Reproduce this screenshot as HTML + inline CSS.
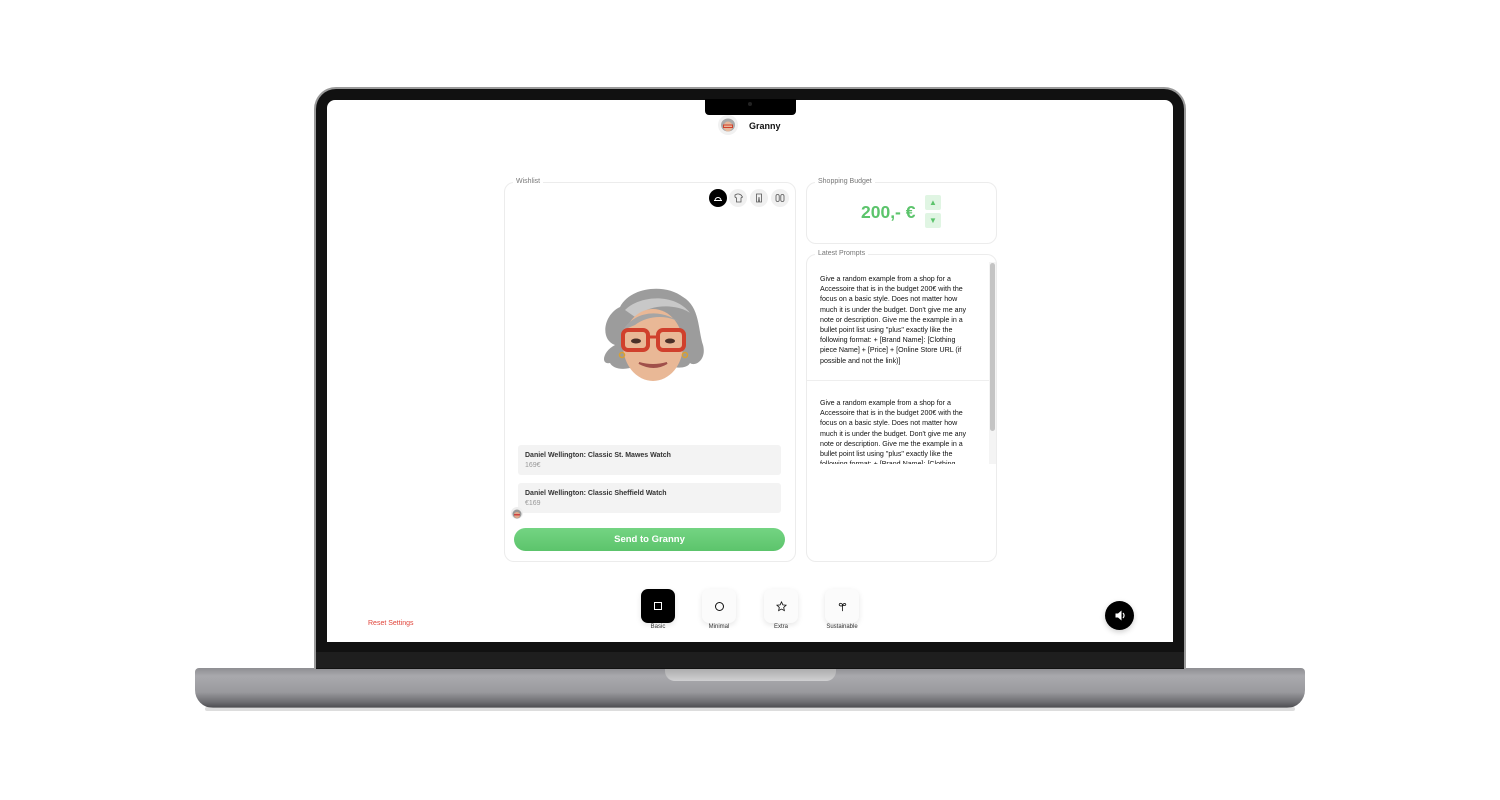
<!DOCTYPE html>
<html><head><meta charset="utf-8"><style>
*{margin:0;padding:0;box-sizing:border-box}
body{width:1500px;height:800px;background:#fff;position:relative;overflow:hidden;font-family:"Liberation Sans",Arial,sans-serif}
.a{position:absolute}
.fs{position:absolute;border:1px solid #ececec;border-radius:10px;background:#fff}
.lg{position:absolute;top:-5px;left:8px;background:#fff;padding:0 3px;font-size:7px;color:#777}
.ic{position:absolute;width:18px;height:18px;border-radius:50%;background:#f0f0f0;top:189px}
.item{position:absolute;left:518px;width:263px;height:30px;background:#f3f3f3;border-radius:3px;padding:6px 7px;font-size:7px;color:#222;line-height:10px}
.item span{color:#999}
.pt{font-size:7.1px;line-height:10.2px;color:#111}
.bb{position:absolute;top:589px;width:34px;height:34px;border-radius:7px;background:#fbfbfb;box-shadow:0 2px 6px rgba(0,0,0,.1);display:flex;align-items:center;justify-content:center}
.bl{position:absolute;top:624px;font-size:6px;color:#333;width:60px;text-align:center}
</style></head><body>
<!-- base -->
<div class="a" style="left:195px;top:668px;width:1110px;height:40px;border-radius:4px 4px 18px 18px;background:linear-gradient(#8e8e92,#a9a9ad 20%,#9a9a9e 60%,#6e6e72 85%,#4a4a4e)"></div>
<div class="a" style="left:205px;top:707px;width:1090px;height:4px;background:#bbb;opacity:.5;border-radius:2px"></div>
<div class="a" style="left:665px;top:668px;width:171px;height:13px;border-radius:0 0 10px 10px;background:linear-gradient(#aaa,#d0d0d2)"></div>
<!-- lid -->
<div class="a" style="left:314px;top:87px;width:872px;height:582px;border-radius:22px 22px 0 0;background:#111;border:2px solid #9a9a9a;border-bottom:none"></div>
<div class="a" style="left:316px;top:652px;width:868px;height:16px;background:#1e1e1e"></div>
<div class="a" style="left:327px;top:100px;width:846px;height:542px;background:#fff;border-radius:8px 8px 0 0"></div>
<div class="a" style="left:705px;top:99px;width:91px;height:16px;background:#000;border-radius:0 0 4px 4px"></div>
<div class="a" style="left:748px;top:102px;width:4px;height:4px;border-radius:50%;background:#222"></div>
<!-- header -->
<div class="a" style="left:718px;top:115px;width:20px;height:20px;border-radius:50%;background:#f1f1f1;overflow:hidden"><svg width="20" height="20" viewBox="0 0 20 20"><ellipse cx="10" cy="10" rx="7" ry="6.5" fill="#aaa"/><ellipse cx="10" cy="11.5" rx="4.5" ry="5" fill="#e6b79a"/><rect x="5.5" y="10" width="9" height="2.5" fill="none" stroke="#d0402c" stroke-width="1"/></svg></div>
<div class="a" style="left:749px;top:121px;font-size:9px;font-weight:bold;color:#111">Granny</div>
<!-- wishlist -->
<div class="fs" style="left:504px;top:182px;width:292px;height:380px"><div class="lg">Wishlist</div></div>
<div class="ic" style="left:709px;background:#000"><svg width="18" height="18"><path d="M5 11.5h8M6 11.5a3 3 0 0 1 6 0" fill="none" stroke="#fff" stroke-width="1"/></svg></div>
<div class="ic" style="left:729px"><svg width="18" height="18"><path d="M6 6l2-1h2l2 1 1.5 2-1.5 1v4H7.5V9L6 8z" fill="none" stroke="#555" stroke-width=".8"/></svg></div>
<div class="ic" style="left:750px"><svg width="18" height="18"><path d="M6.5 5h5v8h-2L9 8l-.5 5h-2z" fill="none" stroke="#555" stroke-width=".8"/></svg></div>
<div class="ic" style="left:771px"><svg width="18" height="18"><rect x="5" y="5.5" width="3.2" height="7" rx="1.5" fill="none" stroke="#555" stroke-width=".8"/><rect x="9.8" y="5.5" width="3.2" height="7" rx="1.5" fill="none" stroke="#555" stroke-width=".8"/></svg></div>
<!-- memoji -->
<svg class="a" style="left:595px;top:285px" width="115" height="105" viewBox="0 0 115 105">
<path d="M20 60C5 55 8 30 25 22C35 2 70 -2 88 12C105 22 103 45 108 60C112 75 100 82 95 78C90 88 60 80 57 70C45 85 20 88 15 78C5 80 8 66 20 60z" fill="#9c9c9c"/>
<path d="M30 25C45 10 80 8 95 28C88 22 60 15 40 32z" fill="#c8c8c8"/>
<ellipse cx="58" cy="60" rx="30" ry="36" fill="#e9b896"/>
<path d="M28 45C40 25 70 22 90 42C80 30 55 28 40 40z" fill="#a5a5a5"/>
<rect x="28" y="45" width="25" height="20" rx="5" fill="none" stroke="#d0402c" stroke-width="4"/>
<rect x="63" y="45" width="26" height="20" rx="5" fill="none" stroke="#d0402c" stroke-width="4"/>
<path d="M53 52h10" stroke="#d0402c" stroke-width="3"/>
<ellipse cx="41" cy="56" rx="5" ry="2.5" fill="#4a3028"/><ellipse cx="75" cy="56" rx="5" ry="2.5" fill="#4a3028"/>
<path d="M44 78q15 8 28 0q-14 4-28 0z" fill="#fff" stroke="#a0504a" stroke-width="2"/>
<circle cx="27" cy="70" r="2.5" fill="none" stroke="#d9a030" stroke-width="1.5"/><circle cx="90" cy="70" r="2.5" fill="none" stroke="#d9a030" stroke-width="1.5"/>
</svg>
<div class="item" style="top:445px"><b style="font-weight:bold;color:#333">Daniel Wellington: Classic St. Mawes Watch</b><br><span>169€</span></div>
<div class="item" style="top:483px"><b style="font-weight:bold;color:#333">Daniel Wellington: Classic Sheffield Watch</b><br><span>€169</span></div>
<div class="a" style="left:511px;top:507px;width:12px;height:12px;border-radius:50%;background:#eee;overflow:hidden"><svg width="12" height="12"><circle cx="6" cy="6" r="4.5" fill="#999"/><circle cx="6" cy="7" r="3" fill="#e2a98a"/><rect x="3" y="6" width="6" height="1.5" fill="#c44"/></svg></div>
<div class="a" style="left:514px;top:528px;width:271px;height:23px;border-radius:12px;background:linear-gradient(#74d483,#5cc46c);color:#fff;font-size:9.5px;font-weight:bold;text-align:center;line-height:23px">Send to Granny</div>
<!-- budget -->
<div class="fs" style="left:806px;top:182px;width:191px;height:62px"><div class="lg">Shopping Budget</div></div>
<div class="a" style="left:861px;top:202px;font-size:17.5px;font-weight:bold;color:#5cc46c">200,- €</div>
<div class="a" style="left:925px;top:195px;width:16px;height:15px;background:#e0f5e3;border-radius:2px;color:#5cc46c;font-size:8px;text-align:center;line-height:15px">▲</div>
<div class="a" style="left:925px;top:213px;width:16px;height:15px;background:#e0f5e3;border-radius:2px;color:#5cc46c;font-size:8px;text-align:center;line-height:15px">▼</div>
<!-- prompts -->
<div class="fs" style="left:806px;top:254px;width:191px;height:308px"><div class="lg">Latest Prompts</div></div>
<div class="a" style="left:807px;top:262px;width:182px;height:202px;overflow:hidden">
<div class="pt" style="padding:12px 10px 12px 13px;width:172px;height:118px">Give a random example from a shop for a Accessoire that is in the budget 200€ with the focus on a basic style. Does not matter how much it is under the budget. Don't give me any note or description. Give me the example in a bullet point list using "plus" exactly like the following format: + [Brand Name]: [Clothing piece Name] + [Price] + [Online Store URL (if possible and not the link)]</div>
<div style="border-top:1px solid #eee"></div>
<div class="pt" style="padding:17px 10px 12px 13px;width:172px">Give a random example from a shop for a Accessoire that is in the budget 200€ with the focus on a basic style. Does not matter how much it is under the budget. Don't give me any note or description. Give me the example in a bullet point list using "plus" exactly like the following format: + [Brand Name]: [Clothing piece Name]</div>
</div>
<div class="a" style="left:989px;top:262px;width:7px;height:202px;background:#f4f4f4"></div>
<div class="a" style="left:990px;top:263px;width:5px;height:168px;background:#c4c4c4;border-radius:3px"></div>
<!-- bottom -->
<div class="a" style="left:368px;top:620px;font-size:7px;color:#e0443a">Reset Settings</div>
<div class="bb" style="left:641px;background:#000"><div style="width:8px;height:8px;border:1px solid #fff"></div></div>
<div class="bb" style="left:702px"><div style="width:9px;height:9px;border:1px solid #111;border-radius:50%"></div></div>
<div class="bb" style="left:764px"><svg width="11" height="11" viewBox="0 0 12 12"><path d="M6 1l1.5 3.2 3.5.4-2.6 2.4.7 3.5L6 8.8 2.9 10.5l.7-3.5L1 4.6l3.5-.4z" fill="none" stroke="#111" stroke-width=".9"/></svg></div>
<div class="bb" style="left:825px"><svg width="11" height="11" viewBox="0 0 12 12"><path d="M6 11V5M6 5C6 2 3 2 2.5 3.5S4 6 6 5M6 5c0-2 3-3 3.5-1.5S8 5 6 5" fill="none" stroke="#111" stroke-width=".9"/></svg></div>
<div class="bl" style="left:628px">Basic</div>
<div class="bl" style="left:689px">Minimal</div>
<div class="bl" style="left:751px">Extra</div>
<div class="bl" style="left:812px">Sustainable</div>
<div class="a" style="left:1105px;top:601px;width:29px;height:29px;border-radius:50%;background:#000;box-shadow:0 2px 6px rgba(0,0,0,.2)"><svg width="29" height="29"><path d="M10.5 12.5h2.5l3.5-3v10l-3.5-3h-2.5z" fill="#fff"/><path d="M18 12a3.5 3.5 0 0 1 0 5" fill="none" stroke="#fff" stroke-width="1.2"/></svg></div>
</body></html>
